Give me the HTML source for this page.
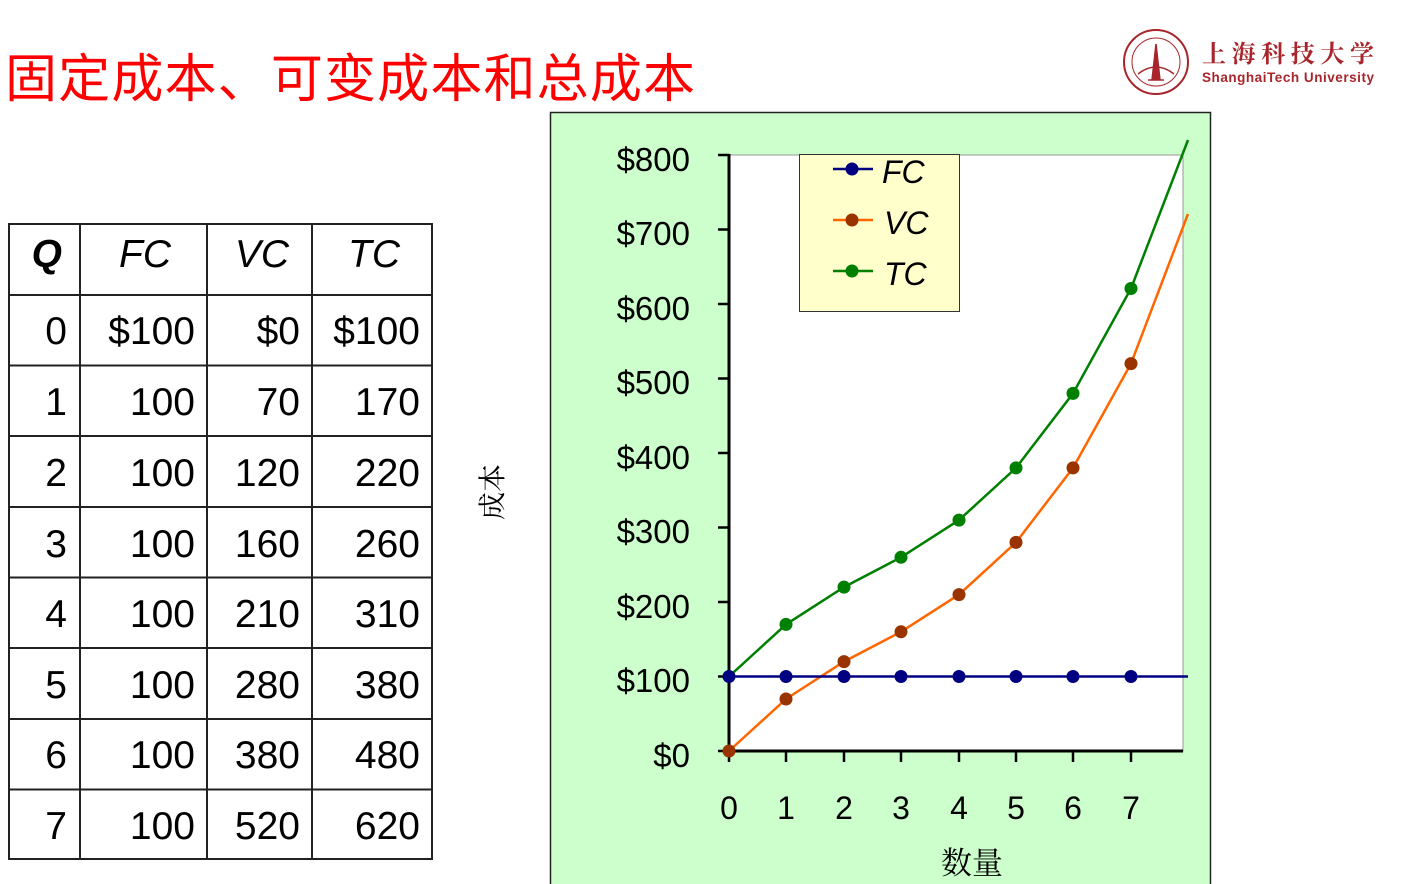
<!DOCTYPE html>
<html><head><meta charset="utf-8"><style>
html,body{margin:0;padding:0;background:#fff;width:1404px;height:884px;overflow:hidden}
svg{display:block}
text{font-family:"Liberation Sans","Noto Sans CJK SC",sans-serif}
</style></head><body>
<svg width="1404" height="884" viewBox="0 0 1404 884" xmlns="http://www.w3.org/2000/svg">
<text x="5" y="97" font-size="52" fill="#ff0000" style="font-family:'Noto Sans CJK SC',sans-serif" textLength="690">固定成本、可变成本和总成本</text>
<g transform="translate(1156,62)">
<circle r="32" fill="none" stroke="#a8262b" stroke-width="2"/>
<circle r="24" fill="none" stroke="#a8262b" stroke-width="1"/>
<path d="M0 -18 L-4 18 L4 18 Z M-8 18 L8 18" fill="#a8262b" stroke="#a8262b" stroke-width="1.5"/>
<path d="M-18 12 Q0 -2 18 12" fill="none" stroke="#a8262b" stroke-width="1.5"/>
</g>
<text x="1202" y="62" font-size="24" fill="#a8262b" font-weight="bold" style="font-family:'Noto Serif CJK SC',serif" textLength="172">上海科技大学</text>
<text x="1202" y="82" font-size="13.5" fill="#a8262b" font-weight="bold" textLength="172">ShanghaiTech University</text>
<g stroke="#222" stroke-width="2" fill="none">
<rect x="9" y="224" width="423" height="635"/>
<line x1="80" y1="224" x2="80" y2="859"/><line x1="207" y1="224" x2="207" y2="859"/><line x1="312" y1="224" x2="312" y2="859"/>
<line x1="9" y1="295" x2="432" y2="295"/><line x1="9" y1="365.5" x2="432" y2="365.5"/><line x1="9" y1="436" x2="432" y2="436"/><line x1="9" y1="507" x2="432" y2="507"/><line x1="9" y1="577.5" x2="432" y2="577.5"/><line x1="9" y1="648" x2="432" y2="648"/><line x1="9" y1="719" x2="432" y2="719"/><line x1="9" y1="789.5" x2="432" y2="789.5"/>
</g>
<g font-size="39" fill="#000">
<text x="62" y="267" text-anchor="end" font-weight="bold" font-style="italic">Q</text>
<text x="145" y="267" text-anchor="middle" font-style="italic">FC</text>
<text x="262" y="267" text-anchor="middle" font-style="italic">VC</text>
<text x="374" y="267" text-anchor="middle" font-style="italic">TC</text>
<g text-anchor="end">
<text x="67" y="344">0</text><text x="195" y="344">$100</text><text x="300" y="344">$0</text><text x="420" y="344">$100</text>
<text x="67" y="415">1</text><text x="195" y="415">100</text><text x="300" y="415">70</text><text x="420" y="415">170</text>
<text x="67" y="486">2</text><text x="195" y="486">100</text><text x="300" y="486">120</text><text x="420" y="486">220</text>
<text x="67" y="557">3</text><text x="195" y="557">100</text><text x="300" y="557">160</text><text x="420" y="557">260</text>
<text x="67" y="627">4</text><text x="195" y="627">100</text><text x="300" y="627">210</text><text x="420" y="627">310</text>
<text x="67" y="698">5</text><text x="195" y="698">100</text><text x="300" y="698">280</text><text x="420" y="698">380</text>
<text x="67" y="768">6</text><text x="195" y="768">100</text><text x="300" y="768">380</text><text x="420" y="768">480</text>
<text x="67" y="839">7</text><text x="195" y="839">100</text><text x="300" y="839">520</text><text x="420" y="839">620</text>
</g></g>
<text transform="translate(502,492) rotate(-90)" font-size="28" text-anchor="middle" style="font-family:'Noto Serif CJK SC',serif">成本</text>
<rect x="550.5" y="112.5" width="660" height="780" fill="#ccffcc" stroke="#222" stroke-width="1.5"/>
<rect x="729" y="155" width="454" height="596" fill="#fff" stroke="#999" stroke-width="1"/>
<g stroke="#000" stroke-width="3">
<line x1="729" y1="154" x2="729" y2="752"/><line x1="728" y1="751" x2="1183" y2="751"/>
</g>
<g stroke="#000" stroke-width="2.5">
<line x1="718" y1="155" x2="729" y2="155"/><line x1="718" y1="229.5" x2="729" y2="229.5"/><line x1="718" y1="304" x2="729" y2="304"/><line x1="718" y1="378.5" x2="729" y2="378.5"/><line x1="718" y1="453" x2="729" y2="453"/><line x1="718" y1="527.5" x2="729" y2="527.5"/><line x1="718" y1="602" x2="729" y2="602"/><line x1="718" y1="676.5" x2="729" y2="676.5"/><line x1="718" y1="751" x2="729" y2="751"/>
<line x1="729" y1="751" x2="729" y2="762"/><line x1="786" y1="751" x2="786" y2="762"/><line x1="844" y1="751" x2="844" y2="762"/><line x1="901" y1="751" x2="901" y2="762"/><line x1="959" y1="751" x2="959" y2="762"/><line x1="1016" y1="751" x2="1016" y2="762"/><line x1="1073" y1="751" x2="1073" y2="762"/><line x1="1131" y1="751" x2="1131" y2="762"/>
</g>
<g font-size="33" text-anchor="end" fill="#000">
<text x="690" y="171">$800</text><text x="690" y="245">$700</text><text x="690" y="320">$600</text><text x="690" y="394">$500</text><text x="690" y="469">$400</text><text x="690" y="543">$300</text><text x="690" y="618">$200</text><text x="690" y="692">$100</text><text x="690" y="767">$0</text>
</g>
<g font-size="32" text-anchor="middle" fill="#000">
<text x="729" y="819">0</text><text x="786" y="819">1</text><text x="844" y="819">2</text><text x="901" y="819">3</text><text x="959" y="819">4</text><text x="1016" y="819">5</text><text x="1073" y="819">6</text><text x="1131" y="819">7</text>
</g>
<text x="972" y="874" font-size="31" text-anchor="middle" style="font-family:'Noto Serif CJK SC',serif">数量</text>
<polyline fill="none" stroke="#ff6600" stroke-width="2.5" points="729,751 786,699 844,661.6 901,631.8 959,594.6 1016,542.4 1073,467.9 1131,363.6 1188,214"/>
<polyline fill="none" stroke="#008000" stroke-width="2.5" points="729,676.5 786,624.4 844,587.1 901,557.3 959,520.1 1016,467.9 1073,393.4 1131,288.5 1188,140"/>
<line x1="729" y1="676.5" x2="1188" y2="676.5" stroke="#000080" stroke-width="2.5"/>
<g fill="#993300">
<circle cx="729" cy="751" r="6.5"/><circle cx="786" cy="699" r="6.5"/><circle cx="844" cy="661.6" r="6.5"/><circle cx="901" cy="631.8" r="6.5"/><circle cx="959" cy="594.6" r="6.5"/><circle cx="1016" cy="542.4" r="6.5"/><circle cx="1073" cy="467.9" r="6.5"/><circle cx="1131" cy="363.6" r="6.5"/>
</g>
<g fill="#008000">
<circle cx="786" cy="624.4" r="6.5"/><circle cx="844" cy="587.1" r="6.5"/><circle cx="901" cy="557.3" r="6.5"/><circle cx="959" cy="520.1" r="6.5"/><circle cx="1016" cy="467.9" r="6.5"/><circle cx="1073" cy="393.4" r="6.5"/><circle cx="1131" cy="288.5" r="6.5"/>
</g>
<g fill="#000080">
<circle cx="729" cy="676.5" r="6.5"/><circle cx="786" cy="676.5" r="6.5"/><circle cx="844" cy="676.5" r="6.5"/><circle cx="901" cy="676.5" r="6.5"/><circle cx="959" cy="676.5" r="6.5"/><circle cx="1016" cy="676.5" r="6.5"/><circle cx="1073" cy="676.5" r="6.5"/><circle cx="1131" cy="676.5" r="6.5"/>
</g>
<rect x="799.5" y="154.5" width="160" height="157" fill="#ffffcc" stroke="#333" stroke-width="1"/>
<line x1="833" y1="169" x2="873" y2="169" stroke="#000080" stroke-width="2.5"/><circle cx="852" cy="169" r="6.5" fill="#000080"/>
<line x1="833" y1="220" x2="873" y2="220" stroke="#ff6600" stroke-width="2.5"/><circle cx="852" cy="220" r="6.5" fill="#993300"/>
<line x1="833" y1="271" x2="873" y2="271" stroke="#008000" stroke-width="2.5"/><circle cx="852" cy="271" r="6.5" fill="#008000"/>
<g font-size="32" font-style="italic" fill="#000">
<text x="882" y="183">FC</text><text x="884" y="234">VC</text><text x="884" y="285">TC</text>
</g>
</svg>
</body></html>
